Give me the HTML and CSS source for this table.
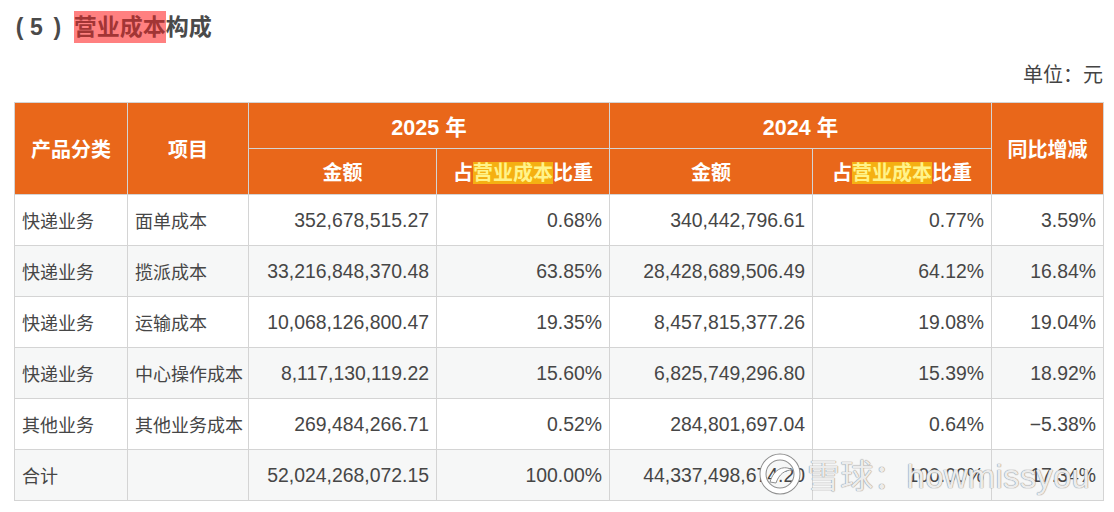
FILE: index.html
```html
<!DOCTYPE html>
<html lang="zh-CN">
<head>
<meta charset="utf-8">
<title>营业成本构成</title>
<link rel="stylesheet" href="styles.css">
</head>
<body>
<div class="page">
  <h2 class="title"><span class="paren">(</span><span class="paren-n">5</span><span class="paren">)</span><span class="hl-red">营业成本</span>构成</h2>
  <div class="unit">单位：元</div>
  <div class="table-wrap">
    <table class="cost">
      <colgroup>
        <col class="c1"><col class="c2"><col class="c3"><col class="c4"><col class="c5"><col class="c6"><col class="c7">
      </colgroup>
      <thead>
        <tr>
          <th rowspan="2">产品分类</th>
          <th rowspan="2">项目</th>
          <th colspan="2" class="year">2025 年</th>
          <th colspan="2" class="year">2024 年</th>
          <th rowspan="2">同比增减</th>
        </tr>
        <tr>
          <th>金额</th>
          <th>占<span class="hl-yel">营业成本</span>比重</th>
          <th>金额</th>
          <th>占<span class="hl-yel">营业成本</span>比重</th>
        </tr>
      </thead>
      <tbody>
        <tr><td>快递业务</td><td>面单成本</td><td class="num">352,678,515.27</td><td class="num">0.68%</td><td class="num">340,442,796.61</td><td class="num">0.77%</td><td class="num">3.59%</td></tr>
        <tr><td>快递业务</td><td>揽派成本</td><td class="num">33,216,848,370.48</td><td class="num">63.85%</td><td class="num">28,428,689,506.49</td><td class="num">64.12%</td><td class="num">16.84%</td></tr>
        <tr><td>快递业务</td><td>运输成本</td><td class="num">10,068,126,800.47</td><td class="num">19.35%</td><td class="num">8,457,815,377.26</td><td class="num">19.08%</td><td class="num">19.04%</td></tr>
        <tr><td>快递业务</td><td>中心操作成本</td><td class="num">8,117,130,119.22</td><td class="num">15.60%</td><td class="num">6,825,749,296.80</td><td class="num">15.39%</td><td class="num">18.92%</td></tr>
        <tr><td>其他业务</td><td>其他业务成本</td><td class="num">269,484,266.71</td><td class="num">0.52%</td><td class="num">284,801,697.04</td><td class="num">0.64%</td><td class="num">−5.38%</td></tr>
        <tr><td>合计</td><td></td><td class="num">52,024,268,072.15</td><td class="num">100.00%</td><td class="num">44,337,498,674.20</td><td class="num">100.00%</td><td class="num">17.34%</td></tr>
      </tbody>
    </table>
    <div class="watermark">
      <svg class="wm-logo" width="48" height="42" viewBox="0 0 48 42">
        <circle cx="23" cy="21" r="17" fill="none" stroke="#8f8f8f" stroke-width="7"/>
        <circle cx="23" cy="21" r="17" fill="none" stroke="#ffffff" stroke-width="5"/>
        <path d="M13 29 C17 15, 28 12, 35 17 C28 17, 22 21, 19 30 Z" fill="#ffffff" stroke="#8f8f8f" stroke-width="1"/>
      </svg>
      <span class="wm-text">雪球：howmissyou</span>
    </div>
  </div>
</div>
</body>
</html>
```

FILE: styles.css
```css
html, body {
  margin: 0;
  padding: 0;
  background: #ffffff;
}

body {
  font-family: "Liberation Sans", "Noto Sans CJK SC", sans-serif;
  color: #444444;
}

.page {
  padding: 10px 11px 0 14px;
}

.title {
  margin: 0;
  font-size: 23px;
  font-weight: bold;
  line-height: 34px;
  color: #4a4a4a;
  display: flex;
  align-items: center;
}

.paren {
  display: inline-block;
  width: 9px;
  text-align: center;
  margin-left: 1px;
}

.paren-n {
  display: inline-block;
  margin: 0 9px 0 6px;
}

.paren + .hl-red {
  margin-left: 12px;
}

.hl-red {
  background: #ff8080;
  color: #a23535;
  line-height: 32px;
}

.unit {
  text-align: right;
  font-size: 20px;
  line-height: 26px;
  margin-top: 18px;
  color: #444444;
}

.table-wrap {
  position: relative;
  margin-top: 14px;
}

.cost {
  border-collapse: collapse;
  table-layout: fixed;
  width: 1089px;
  font-size: 18px;
}

.c1 { width: 113px; }
.c2 { width: 121px; }
.c3 { width: 188px; }
.c4 { width: 173px; }
.c5 { width: 203px; }
.c6 { width: 179px; }
.c7 { width: 112px; }

.cost th,
.cost td {
  border: 1px solid #d4d4d4;
}

.cost th {
  background: #e9671a;
  color: #ffffff;
  font-size: 20px;
  font-weight: bold;
  height: 45px;
  padding: 0 4px;
  text-align: center;
}

.cost th.year {
  font-size: 21.5px;
}

.hl-yel {
  background: #f5b012;
  color: #fff38a;
}

.cost td {
  height: 50px;
  padding: 0 7px;
  color: #464646;
  white-space: nowrap;
}

.cost td.num {
  text-align: right;
  padding-right: 7px;
  font-size: 19.4px;
}

.cost tbody tr:nth-child(even) td {
  background: #f6f7f7;
}

.watermark {
  position: absolute;
  left: 743px;
  bottom: 3px;
  display: flex;
  align-items: center;
  gap: 2px;
  pointer-events: none;
}

.wm-text {
  font-size: 33px;
  color: rgba(255, 255, 255, 0.85);
  text-shadow: 0 0 1px #8a8a8a, 0 0 1px #8a8a8a;
  letter-spacing: 0.2px;
}
```
